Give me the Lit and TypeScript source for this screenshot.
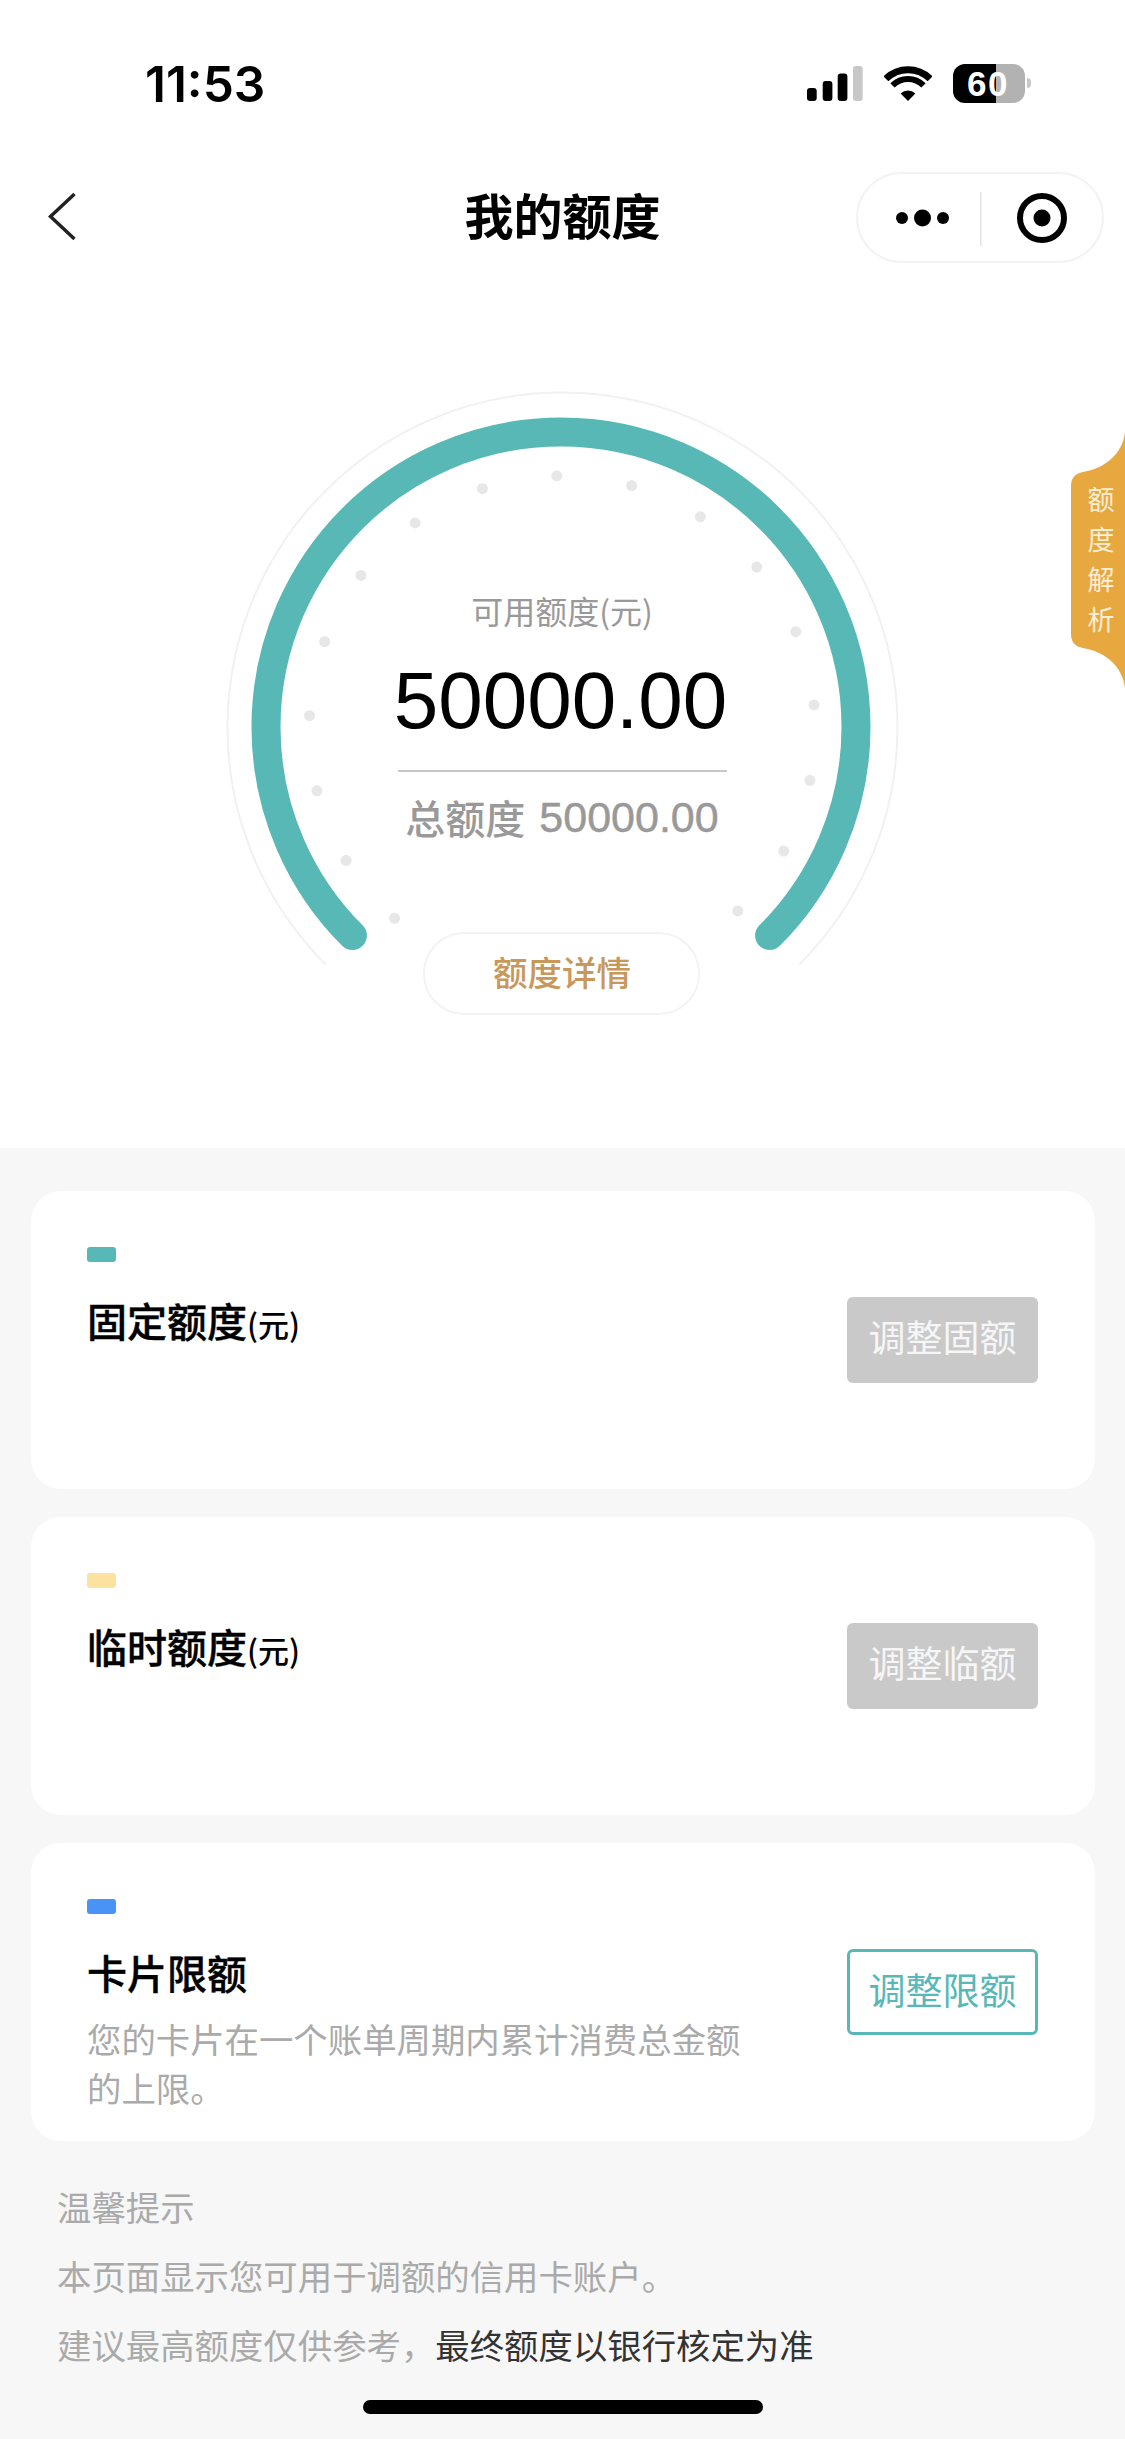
import { LitElement, html, css, svg } from "lit";
import { customElement } from "lit/decorators.js";

const CX = 339;
const CY = 336;
const polar = (r: number, deg: number, cx = CX, cy = CY) => {
  const a = ((deg - 90) * Math.PI) / 180;
  return [cx + r * Math.cos(a), cy + r * Math.sin(a)];
};
const arc = (r: number, cx = CX, cy = CY) => {
  const [x1, y1] = polar(r, -135, cx, cy);
  const [x2, y2] = polar(r, 135, cx, cy);
  return `M${x1} ${y1} A${r} ${r} 0 1 1 ${x2} ${y2}`;
};
const dots = Array.from({ length: 17 }, (_, i) => polar(253, -138.5 + 17.16 * i, CX + 1.2, CY + 1.8));

@customElement("app-root")
export class AppRoot extends LitElement {
  static styles = css`
    :host {
      display: block;
      width: 1125px;
      height: 2439px;
      overflow: hidden;
      position: relative;
      background: #f7f7f7;
      font-family: "Liberation Sans", "Noto Sans CJK SC", sans-serif;
    }
    .cjk { font-family: "Noto Sans CJK SC", sans-serif; }
    .top { background: #fff; height: 1148px; }
    .status {
      height: 172px;
      box-sizing: border-box;
      padding: 64px 0 0 145px;
      display: flex;
      align-items: flex-start;
    }
    .time {
      font-family: Inter, sans-serif;
      font-weight: 600;
      font-size: 49.5px;
      line-height: 40px;
      color: #000;
      width: 662px;
    }
    .status svg { display: block; flex: none; }
    .signal { margin-top: 2px; margin-right: 21px; }
    .wifi { margin-top: 2px; margin-right: 21px; }
    .battery {
      width: 72px;
      height: 39px;
      border-radius: 12px;
      overflow: hidden;
      background: linear-gradient(90deg, #000 60%, #b2b2b2 60%);
      color: #fff;
      font-weight: 700;
      font-size: 35px;
      line-height: 39px;
      text-indent: 14px;
      letter-spacing: 1.5px;
    }
    .nub {
      width: 4px;
      height: 10px;
      margin: 14px 0 0 2px;
      background: #c8c8c8;
      border-radius: 0 4px 4px 0;
    }
    .nav {
      height: 90px;
      display: flex;
      align-items: center;
      position: relative;
      padding-left: 48px;
    }
    .nav .back { display: block; flex: none; }
    .title {
      position: absolute;
      left: 0;
      right: 0;
      top: -3px;
      text-align: center;
      font-family: "Noto Sans CJK SC", sans-serif;
      font-weight: 700;
      font-size: 49px;
      line-height: 90px;
      color: #000;
    }
    .capsule {
      position: absolute;
      left: 856px;
      top: 0;
      width: 248px;
      height: 91px;
      box-sizing: border-box;
      border: 2px solid #f3f3f3;
      border-radius: 46px;
    }
    .capsule svg { display: block; }
    .hero { padding-top: 129px; position: relative; }
    .gauge {
      width: 680px;
      margin-left: 222px;
      display: grid;
      justify-items: center;
    }
    .gauge > * { grid-area: 1 / 1; }
    .gauge svg { display: block; }
    .stack {
      display: flex;
      flex-direction: column;
      align-items: center;
      padding-top: 199px;
    }
    .label {
      font-family: "Noto Sans CJK SC", sans-serif;
      font-size: 32px;
      line-height: 40px;
      color: #999;
    }
    .amount {
      margin: 26px 3px 0 0;
      font-size: 80px;
      line-height: 90px;
      color: #000;
    }
    .rule { margin: 24px 0 0 2px; width: 329px; height: 2px; background: #c8c8c8; }
    .total {
      margin-top: 20px;
      display: flex;
      gap: 14px;
      align-items: center;
      line-height: 50px;
      color: #999;
      font-size: 43px;
    }
    .total .cjk { font-size: 40px; font-weight: 500; }
    .total .num { -webkit-text-stroke: 0.5px #999; }
    .detail {
      margin-top: 90px;
      width: 277px;
      height: 83px;
      box-sizing: border-box;
      border: 2px solid #f3f3f3;
      border-radius: 41px;
      background: #fff;
      font-family: "Noto Sans CJK SC", sans-serif;
      font-size: 34.5px;
      font-weight: 500;
      line-height: 74px;
      text-align: center;
      color: #c8975a;
    }
    .tab {
      position: absolute;
      left: 1071px;
      top: 432px;
      width: 54px;
      height: 256px;
    }
    .tab svg { position: absolute; inset: 0; display: block; }
    .tab-text {
      position: relative;
      display: flex;
      flex-direction: column;
      align-items: center;
      padding: 47px 0 0 6px;
      font-family: "Noto Sans CJK SC", sans-serif;
      font-size: 27px;
      line-height: 40px;
      color: #fbeed6;
    }
    .cards {
      padding: 43px 30px 0 31px;
      display: flex;
      flex-direction: column;
      gap: 28px;
    }
    .card {
      height: 298px;
      box-sizing: border-box;
      background: #fff;
      border-radius: 30px;
      padding: 56px 57px 0 56px;
    }
    .mark { width: 29px; height: 15px; border-radius: 3px; }
    .teal { background: #58b8b8; }
    .yellow { background: #fbe39f; }
    .blue { background: #4893f5; }
    .row {
      margin-top: 35px;
      display: flex;
      justify-content: space-between;
      align-items: flex-start;
    }
    .name {
      font-family: "Noto Sans CJK SC", sans-serif;
      font-weight: 500;
      -webkit-text-stroke: 0.4px #000;
      font-size: 40px;
      line-height: 46px;
      color: #000;
    }
    .name small { font-size: 31px; font-weight: 500; -webkit-text-stroke: 0; }
    .desc {
      margin-top: 19px;
      width: 670px;
      font-family: "Noto Sans CJK SC", sans-serif;
      font-size: 34.4px;
      line-height: 48.5px;
      color: #aaa;
    }
    .btn {
      flex: none;
      width: 191px;
      height: 86px;
      box-sizing: border-box;
      border-radius: 6px;
      font-family: "Noto Sans CJK SC", sans-serif;
      font-size: 37px;
      line-height: 78px;
      text-align: center;
    }
    .off { background: #c9c9c9; color: #f6f6f6; }
    .on { border: 3px solid #58b8b8; color: #58b8b8; line-height: 74px; }
    .tips {
      margin-top: 31px;
      padding-left: 57px;
      font-family: "Noto Sans CJK SC", sans-serif;
      font-size: 34.4px;
      line-height: 69px;
      color: #aaa;
    }
    .tips b { font-weight: 400; color: #333; }
    .home {
      margin: 21px auto 0;
      width: 400px;
      height: 14px;
      border-radius: 7px;
      background: #000;
    }
  `;

  private card(color: string, name: string, unit: boolean, btn: string, on: boolean, desc?: unknown) {
    return html`<section class="card">
      <div class="mark ${color}"></div>
      <div class="row">
        <div>
          <div class="name">${name}${unit ? html`<small>(元)</small>` : ""}</div>
          ${desc ? html`<div class="desc">${desc}</div>` : ""}
        </div>
        <div class="btn ${on ? "on" : "off"}">${btn}</div>
      </div>
    </section>`;
  }

  render() {
    return html`
      <div class="top">
        <div class="status">
          <div class="time">11:53</div>
          <svg class="signal" width="56" height="35" viewBox="0 0 56 35">
            <rect x="0" y="22" width="9.7" height="13" rx="3" fill="#000" />
            <rect x="15.7" y="15" width="9.7" height="20" rx="3" fill="#000" />
            <rect x="30.7" y="7.5" width="9.7" height="27.5" rx="3" fill="#000" />
            <rect x="46" y="0" width="9.7" height="35" rx="3" fill="#c8c8c8" />
          </svg>
          <svg class="wifi" width="48" height="35" viewBox="0 0 48 35">
            <path d="M1.87 12.87 A31.3 31.3 0 0 1 46.13 12.87" fill="none" stroke="#000" stroke-width="7" />
            <path d="M8.44 19.44 A22 22 0 0 1 39.56 19.44" fill="none" stroke="#000" stroke-width="6" />
            <path d="M16.6 27.6 A10.5 10.5 0 0 1 31.4 27.6 L24 35 Z" fill="#000" />
          </svg>
          <div class="battery">60</div>
          <div class="nub"></div>
        </div>
        <div class="nav">
          <svg class="back" width="28" height="50" viewBox="0 0 28 50">
            <path d="M26.5 2 L2.5 24.5 L26.5 47" fill="none" stroke="#222" stroke-width="3.5" />
          </svg>
          <div class="title">我的额度</div>
          <div class="capsule">
            <svg width="244" height="87" viewBox="0 0 244 87">
              <circle cx="44" cy="44" r="6" fill="#000" />
              <circle cx="64.5" cy="44" r="8.5" fill="#000" />
              <circle cx="85" cy="44" r="6" fill="#000" />
              <rect x="122" y="18" width="1.5" height="54" fill="#e3e3e3" />
              <circle cx="184" cy="44" r="22" fill="none" stroke="#000" stroke-width="6" />
              <circle cx="184" cy="44" r="8.5" fill="#000" />
            </svg>
          </div>
        </div>
        <div class="hero">
          <div class="gauge">
            <svg width="680" height="630" viewBox="0 0 680 630">
              <path d="${arc(335, CX + 1.5, CY + 0.5)}" fill="none" stroke="#f1f1f1" stroke-width="2" />
              <path d="${arc(295)}" fill="none" stroke="#57b8b6" stroke-width="29" stroke-linecap="round" />
              ${dots.map(([x, y]) => svg`<circle cx="${x}" cy="${y}" r="5.5" fill="#e7e7e7" />`)}
            </svg>
            <div class="stack">
              <div class="label">可用额度(元)</div>
              <div class="amount">50000.00</div>
              <div class="rule"></div>
              <div class="total"><span class="cjk">总额度</span><span class="num">50000.00</span></div>
              <div class="detail">额度详情</div>
            </div>
          </div>
        </div>
      </div>
      <aside class="tab">
        <svg width="54" height="256" viewBox="0 0 54 256">
          <path d="M54 0 C52 20 36 36 12 40 Q0 42 0 54 L0 202 Q0 214 12 216 C36 220 52 236 54 256 Z" fill="#e8a840" />
        </svg>
        <div class="tab-text"><span>额</span><span>度</span><span>解</span><span>析</span></div>
      </aside>
      <div class="cards">
        ${this.card("teal", "固定额度", true, "调整固额", false)}
        ${this.card("yellow", "临时额度", true, "调整临额", false)}
        ${this.card("blue", "卡片限额", false, "调整限额", true, "您的卡片在一个账单周期内累计消费总金额的上限。")}
      </div>
      <div class="tips">
        <div>温馨提示</div>
        <div>本页面显示您可用于调额的信用卡账户。</div>
        <div>建议最高额度仅供参考，<b>最终额度以银行核定为准</b></div>
      </div>
      <div class="home"></div>
    `;
  }
}
